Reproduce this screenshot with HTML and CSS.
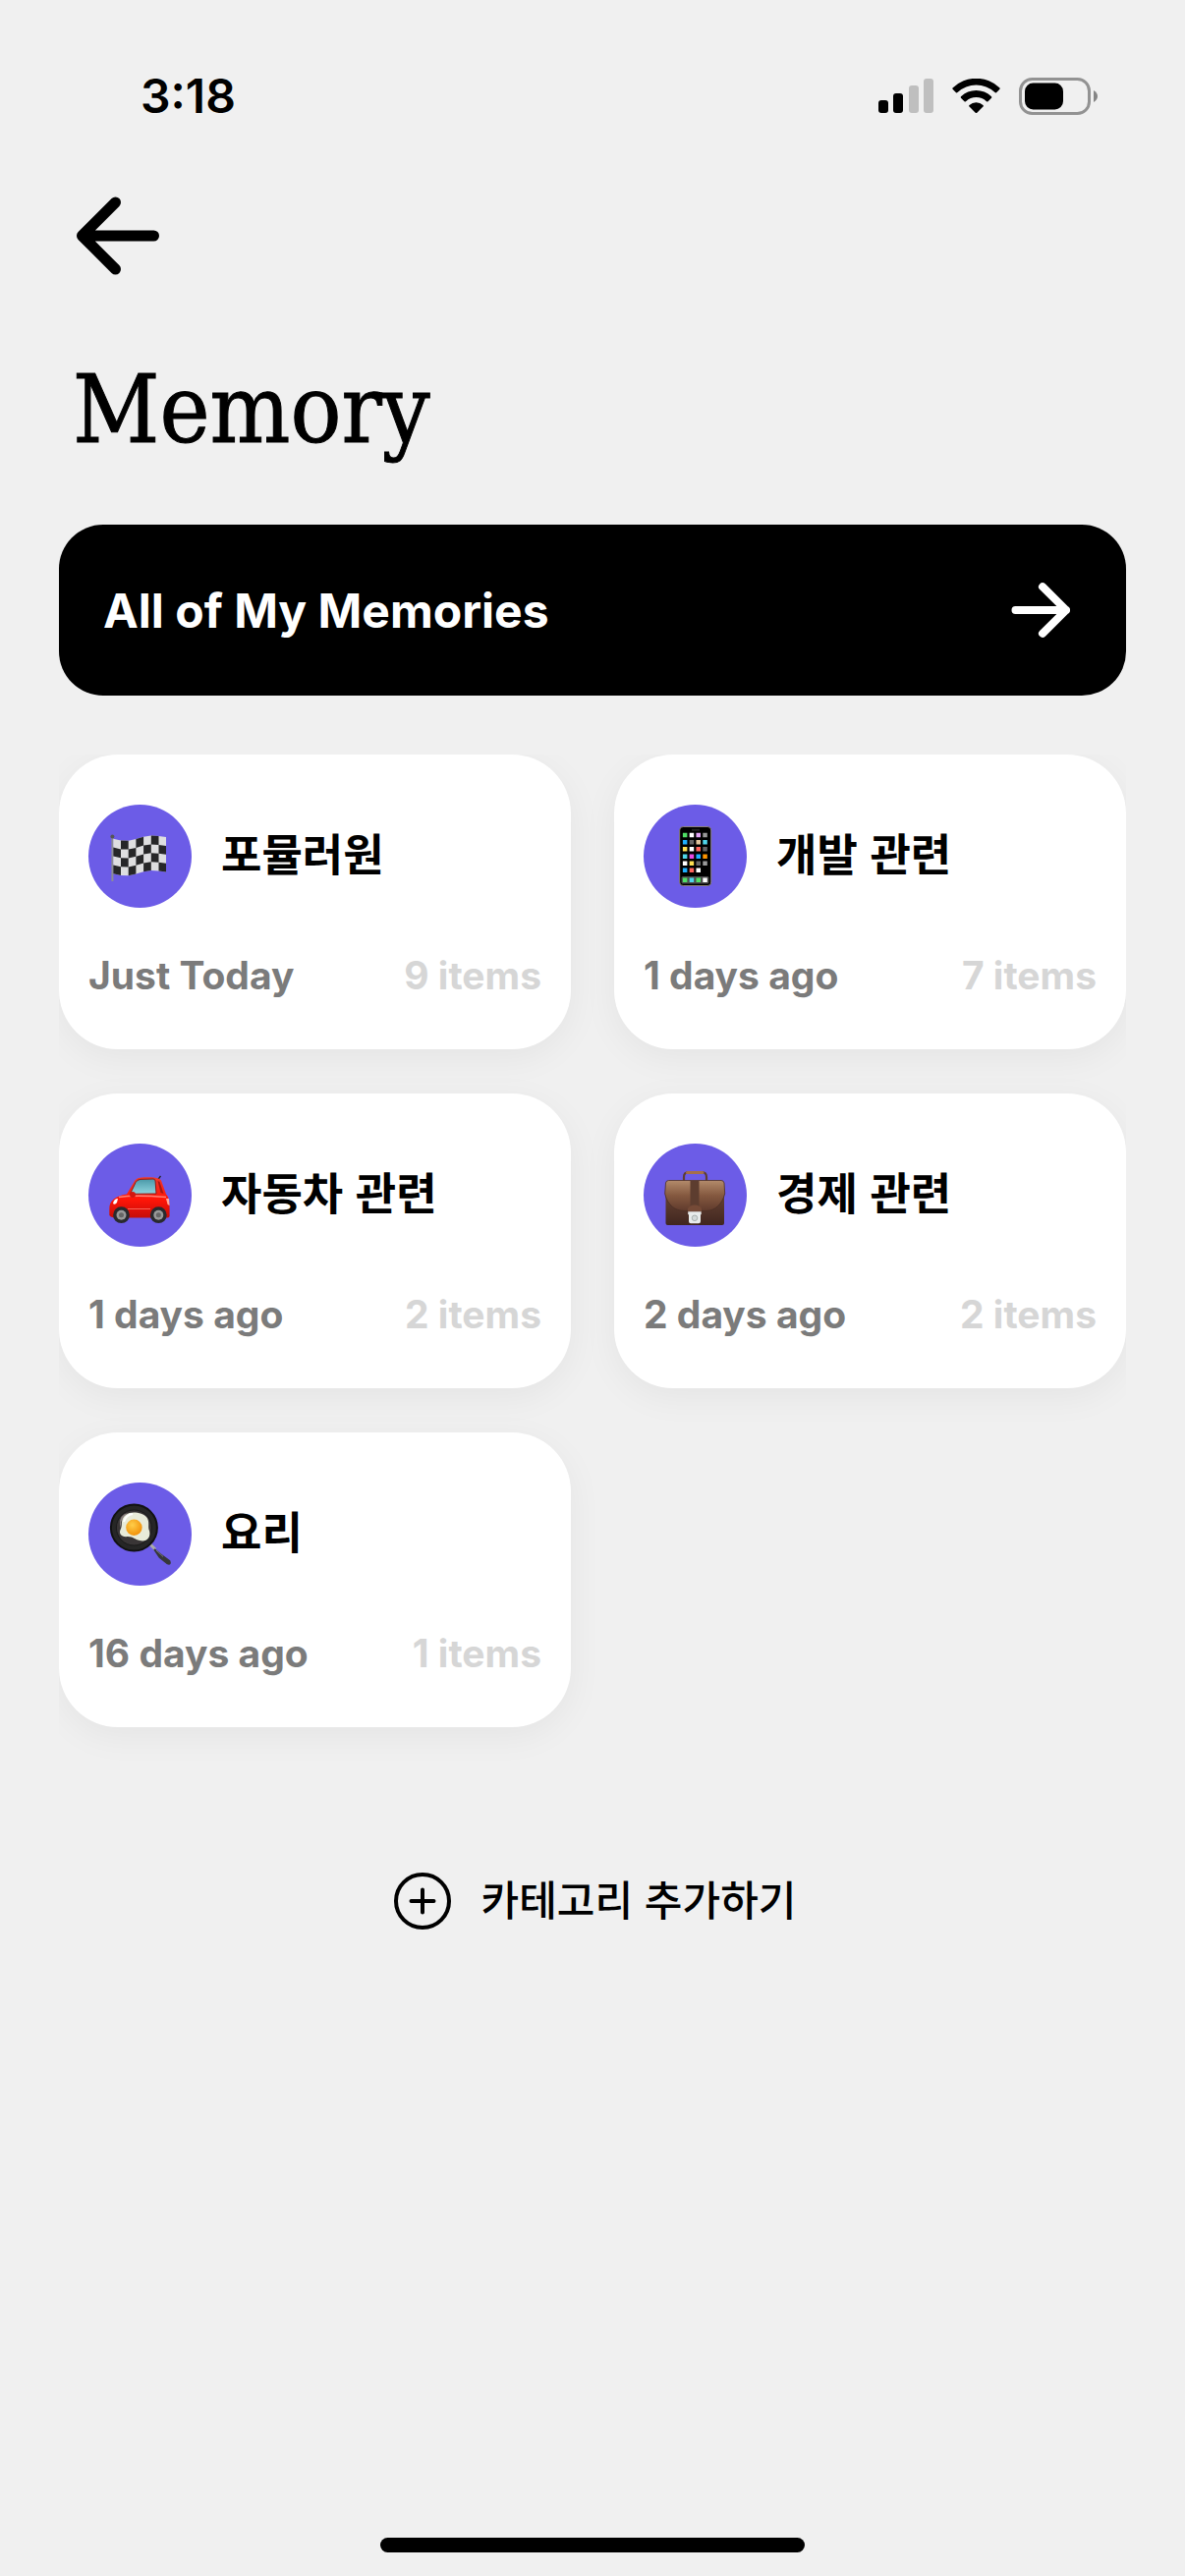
FILE: index.html
```html
<!DOCTYPE html>
<html lang="ko">

<head>
    <meta charset="utf-8">
    <meta name="viewport" content="width=device-width, initial-scale=1">
    <title>Memory</title>
    <link rel="stylesheet" href="styles.css">
</head>

<body>
    <header class="status-bar">
        <span class="time">3:18</span>
        <div class="status-icons">
            <svg width="56" height="36" viewBox="0 0 56 36">
                <rect x="0" y="22" width="10" height="13" rx="3" />
                <rect x="15" y="15" width="10" height="20" rx="3" />
                <rect x="31" y="7" width="10" height="28" rx="3" fill="#bfbfbf" />
                <rect x="46" y="0" width="10" height="35" rx="3" fill="#bfbfbf" />
            </svg>
            <svg width="49" height="36" viewBox="0 0 49 36">
                <path d="M.5 9.5A34.5 34.5 0 0 1 48.500 9.500Q49 10.500 48 11.300L45 14.300Q44.300 14.800 43.500 14A28 28 0 0 0 5.500 14Q4.700 14.800 4 14.300L1 11.300Q0 10.500 .5 9.500z" />
                <path d="M9 18.200A22.500 22.500 0 0 1 40 18.200Q40.700 19 40 19.800L36.500 23.200Q35.800 23.800 35 23.200A15.500 15.500 0 0 0 14 23.200Q13.200 23.800 12.500 23.200L9 19.800Q8.300 19 9 18.200z" />
                <path d="M17.500 27A10.500 10.500 0 0 1 31.500 27Q32.300 27.800 31.500 28.600L25.300 34.700Q24.500 35.400 23.700 34.700L17.500 28.600Q16.700 27.800 17.500 27z" />
            </svg>
            <svg width="80" height="38" viewBox="0 0 80 38">
                <rect x="1.500" y="1.500" width="70" height="35" rx="12" fill="none" stroke="#929292" stroke-width="3" />
                <rect x="6" y="5.500" width="39" height="27" rx="8.500" />
                <path d="M76 13Q80 15.500 80 19T76 25z" fill="#858585" />
            </svg>
        </div>
    </header>

    <main class="content">
        <button class="back" aria-label="Back">
            <svg width="90" height="90" viewBox="0 0 90 90">
                <path d="M81.500 45H9M42.500 11L8.500 45l34 34" />
            </svg>
        </button>

        <h1>Memory</h1>

        <a class="all-memories" href="#">
            All of My Memories
            <svg width="60" height="60" viewBox="0 0 60 60">
                <path d="M4.500 30H56M32 6.200L56 30L32 53.800" />
            </svg>
        </a>

        <div class="categories">
            <a class="card" href="#">
                <div class="card-title">
                    <svg class="icon" viewBox="0 0 105 105">
                        <path d="M24.400 32v46" stroke="#8d8d96" stroke-width="2" />
                        <circle cx="24.400" cy="32.500" r="2" fill="#555" />
                        <path d="M25.300 34.700L33 36.500L40.700 36.700L48.400 35L56.100 32.700L63.800 31.500L71.500 32L79 33V68.600L71.500 67.600L63.800 67.100L56.100 68.300L48.400 70.600L40.700 72.300L33 72.100L25.300 70.300z" fill="#dedee0" />
                        <path fill="#262628" d="M25.300 43.600l7.700 1.800v8.900l-7.700-1.800zM25.300 61.400l7.700 1.800v8.900l-7.700-1.800z
                            M33 36.500l7.700 .2v8.900l-7.700-.2zM33 54.300l7.700 .2v8.900l-7.700-.2z
                            M40.700 45.600l7.700-1.700v8.900l-7.700 1.700zM40.700 63.400l7.700-1.700v8.900l-7.700 1.700z
                            M48.400 35l7.700-2.300v8.900l-7.700 2.300zM48.400 52.800l7.700-2.300v8.900l-7.700 2.300z
                            M56.100 41.600l7.700-1.200v8.900l-7.700 1.200zM56.100 59.400l7.700-1.200v8.900l-7.700 1.200z
                            M63.800 31.500l7.700 .5v8.900l-7.700-.5zM63.800 49.300l7.700 .5v8.900l-7.700-.5z
                            M71.500 40.900l7.500 1v8.900l-7.500-1zM71.500 58.700l7.500 1v8.900l-7.500-1z" />
                    </svg>
                    <h2>포뮬러원</h2>
                </div>
                <div class="card-info">
                    <span>Just Today</span>
                    <span class="count">9 items</span>
                </div>
            </a>

            <a class="card" href="#">
                <div class="card-title">
                    <svg class="icon" viewBox="0 0 105 105">
                        <rect x="36.700" y="22.500" width="32" height="60" rx="3.500" stroke="#8b8078" stroke-width="1" />
                        <path d="M49 25.800h8" stroke="#222" stroke-width="2" />
                        <rect x="38.500" y="73" width="28" height="7.500" rx="1.500" fill="#4b4b4b" />
                        <g stroke-width="4.600" fill="none">
                            <path stroke="#4fe065" d="M39.900 31h4.500M39.900 76.700h4.500M53.500 76.700h4.500" />
                            <path stroke="#fff" d="M46.700 31h4.500M46.700 45.300h4.500M39.900 59.700h4.500M53.500 66.700h4.500M60.300 76.700h4.500" />
                            <path stroke="#e3a5f5" d="M53.500 31h4.500" />
                            <path stroke="#999" d="M60.300 31h4.500M60.300 59.700h4.500" />
                            <path stroke="#1fb0ff" d="M39.900 38.200h4.500M53.500 52.700h4.500M39.900 66.700h4.500" />
                            <path stroke="#666" d="M46.700 38.200h4.500M60.300 45.300h4.500M53.500 59.700h4.500" />
                            <path stroke="#dfc39c" d="M53.500 38.200h4.500" />
                            <path stroke="#4fd5ea" d="M60.300 38.200h4.500M39.900 52.700h4.500M46.700 76.700h4.500" />
                            <path stroke="#ffe052" d="M39.900 45.300h4.500M46.700 59.700h4.500" />
                            <path stroke="#ff645c" d="M53.500 45.300h4.500M46.700 66.700h4.500" />
                            <path stroke="#ea4ae3" d="M46.700 52.700h4.500" />
                            <path stroke="#ff9500" d="M60.300 52.700h4.500" />
                        </g>
                    </svg>
                    <h2>개발 관련</h2>
                </div>
                <div class="card-info">
                    <span>1 days ago</span>
                    <span class="count">7 items</span>
                </div>
            </a>

            <a class="card" href="#">
                <div class="card-title">
                    <svg class="icon" viewBox="0 0 105 105">
                        <defs>
                            <linearGradient id="car" x2="0" y2="1">
                                <stop offset="0" stop-color="#ef3a2c" />
                                <stop offset=".55" stop-color="#ff1508" />
                                <stop offset="1" stop-color="#c50d08" />
                            </linearGradient>
                            <linearGradient id="glass" x2="0" y2="1">
                                <stop offset="0" stop-color="#4998a8" />
                                <stop offset="1" stop-color="#91d5de" />
                            </linearGradient>
                        </defs>
                        <path d="M70.500 37l3-4" stroke="#222" stroke-width="1.300" />
                        <path d="M21.300 67C21 58 27 53.500 39 51.500L47 38C49 35 52 34.200 59 34.200C66 34.200 72 34.500 74 37.500L79 51.500C82 55 83 58 82.600 74Q82 75.500 80 75.500H26Q22 74.500 21.300 73z" fill="url(#car)" />
                        <path d="M42.500 51.300L48 39.500Q49.500 36.600 53 36.400L66 36Q67.800 36 68.100 38L69 51z" fill="url(#glass)" stroke="#8d1b16" />
                        <path d="M70.500 38l3 12 3 1-4-12z" fill="#a81612" />
                        <path d="M31 54.500Q47 52 79 54.500" fill="none" stroke="#ff8175" stroke-width="1.400" />
                        <path d="M40 66.500H63" stroke="#fa6257" stroke-width="1" />
                        <path d="M25 61q1-5 5-5l-1 4q-2 3-4 1z" fill="#fff" />
                        <circle cx="45" cy="52" r="3" fill="#d41710" />
                        <path d="M79 56h3l.6 7-2-1z" fill="#ffae9f" />
                        <circle cx="33.500" cy="72.700" r="8.400" fill="#292a2e" />
                        <circle cx="71.300" cy="72.700" r="8.400" fill="#292a2e" />
                        <circle cx="33.500" cy="72.700" r="5" fill="#999" />
                        <circle cx="71.300" cy="72.700" r="5" fill="#999" />
                        <circle cx="33.500" cy="72.700" r="2.500" fill="#666" />
                        <circle cx="71.300" cy="72.700" r="2.500" fill="#666" />
                    </svg>
                    <h2>자동차 관련</h2>
                </div>
                <div class="card-info">
                    <span>1 days ago</span>
                    <span class="count">2 items</span>
                </div>
            </a>

            <a class="card" href="#">
                <div class="card-title">
                    <svg class="icon" viewBox="0 0 105 105">
                        <defs>
                            <linearGradient id="case" x2="0" y2="1">
                                <stop offset="0" stop-color="#6b4636" />
                                <stop offset="1" stop-color="#40261f" />
                            </linearGradient>
                            <linearGradient id="flap" x2="0" y2="1">
                                <stop offset="0" stop-color="#b38b6b" />
                                <stop offset=".5" stop-color="#84583f" />
                                <stop offset="1" stop-color="#603b2d" />
                            </linearGradient>
                        </defs>
                        <path d="M41 38v-4q0-5 5-5h13q5 0 5 5v4" fill="none" stroke="#5e3e33" stroke-width="2.200" />
                        <path d="M44.500 29.500h15.500" stroke="#a56f4b" stroke-width="3" stroke-linecap="round" />
                        <path d="M22.500 48h59.500v33q0 2-2 2H24.500q-2 0-2-2z" fill="url(#case)" />
                        <path d="M22.500 40q.5-2.500 3-2.500H79q2.500 0 3 2.500l.7 11C80 62 72 68.500 64 68.500H41C32 68.500 24 62 21.700 51z" fill="url(#flap)" stroke="#4c3026" stroke-width=".8" />
                        <path d="M47.500 38h9v26h-9z" fill="#5d3d2f" />
                        <path d="M45 69v-3q2-3.500 7-3.500t7 3.500v3z" fill="#754a37" />
                        <path d="M45.200 69.300h13.500v3H58v7q0 2-2 2h-8q-2 0-2-2v-7h-.8z" fill="#e8eceb" />
                        <circle cx="52" cy="75.800" r="2.800" fill="#d4dad9" stroke="#9ca4a2" stroke-width=".8" />
                    </svg>
                    <h2>경제 관련</h2>
                </div>
                <div class="card-info">
                    <span>2 days ago</span>
                    <span class="count">2 items</span>
                </div>
            </a>

            <a class="card" href="#">
                <div class="card-title">
                    <svg class="icon" viewBox="0 0 105 105">
                        <defs>
                            <radialGradient id="yolk" cx=".4" cy=".35" r=".7">
                                <stop offset="0" stop-color="#ffce4a" />
                                <stop offset="1" stop-color="#f08d05" />
                            </radialGradient>
                        </defs>
                        <path d="M63 63l5 5" stroke="#aaa" stroke-width="3" />
                        <path d="M67.500 68.500L73 73L82.500 80Q84 84 80 82L72.500 76z" fill="#37383a" stroke="#37383a" stroke-width="2" stroke-linejoin="round" />
                        <path d="M69 69l7 6.500" stroke="#777" stroke-width="1" />
                        <circle cx="46.400" cy="46" r="23.500" fill="#262626" stroke="#111" stroke-width="2" />
                        <circle cx="46.400" cy="46" r="18" fill="#393536" stroke="#1a1a1a" stroke-width="1" />
                        <path d="M32 43Q31 33 40 31Q30 39 34 49z" fill="#887e7d" />
                        <path d="M38 33C43 28 56 31 59 35C63 40 60 45 62 49C64 56 59 61 52 59C47 58 46 55 40 55C34 56 30 52 33 47C35 43 32 38 38 33z" fill="#e8ebd9" />
                        <path d="M36 40q2-7 9-8" fill="none" stroke="#fff" stroke-width="2" />
                        <circle cx="46.400" cy="45.700" r="8.200" fill="url(#yolk)" />
                    </svg>
                    <h2>요리</h2>
                </div>
                <div class="card-info">
                    <span>16 days ago</span>
                    <span class="count">1 items</span>
                </div>
            </a>
        </div>

        <button class="add">
            <svg width="60" height="60" viewBox="0 0 60 60">
                <circle cx="30" cy="30" r="27" />
                <path d="M30 18.500v23M18.500 30h23" />
            </svg>
            <span>카테고리 추가하기</span>
        </button>
    </main>

    <div class="home-indicator"></div>
</body>

</html>
```

FILE: styles.css
```css
* {
    box-sizing: border-box;
}

body {
    margin: 0;
    min-height: 100vh;
    display: flex;
    flex-direction: column;
    background-color: #f0f0f0;
    color: black;
    font-family: Inter, "Noto Sans CJK KR", sans-serif;
}

h1, h2 {
    margin: 0;
}

a {
    color: inherit;
    text-decoration: none;
}

button {
    padding: 0;
    border: none;
    background: none;
    color: inherit;
    font: inherit;
}

svg {
    display: block;
    flex-shrink: 0;
}

.status-bar {
    display: flex;
    justify-content: space-between;
    align-items: center;
    height: 195px;
    padding: 0 89px 0 143px;
}

.time {
    font-size: 48px;
    font-weight: 600;
}

.status-icons {
    display: flex;
    align-items: center;
    gap: 19px;
}

.content {
    display: flex;
    flex-direction: column;
    padding: 0 60px;
}

.back {
    align-self: flex-start;
    margin-left: 15px;
}

.back path {
    fill: none;
    stroke: black;
    stroke-width: 11;
    stroke-linecap: round;
    stroke-linejoin: round;
}

h1 {
    margin: 72px 14px 57px;
    font-family: "DejaVu Serif Condensed", "DejaVu Serif", serif;
    font-size: 96px;
    font-weight: 400;
    line-height: 120px;
    -webkit-text-stroke: 1px black;
}

.all-memories {
    display: flex;
    justify-content: space-between;
    align-items: center;
    height: 174px;
    padding: 0 57px 0 45px;
    border-radius: 45px;
    background-color: black;
    color: white;
    font-size: 48px;
    font-weight: 700;
}

.all-memories path {
    fill: none;
    stroke: white;
    stroke-width: 8;
    stroke-linecap: round;
    stroke-linejoin: round;
}

/* shadows are cut at the top and sides of the list */
.categories {
    display: grid;
    grid-template-columns: 1fr 1fr;
    gap: 45px 44px;
    margin-top: 60px;
    clip-path: inset(0 0 -60px 0);
}

.card {
    padding: 51px 30px 48px;
    border-radius: 60px;
    background-color: white;
    box-shadow: 0 9px 36px rgba(0, 0, 0, .05);
}

.card-title {
    display: flex;
    align-items: center;
    gap: 30px;
}

.icon {
    width: 105px;
    height: 105px;
    border-radius: 50%;
    background-color: #6c5ce7;
}

h2 {
    padding-bottom: 8px;
    font-family: "Noto Sans CJK KR", sans-serif;
    font-size: 45px;
    font-weight: 700;
    line-height: 60px;
}

.card-info {
    display: flex;
    justify-content: space-between;
    margin-top: 42px;
    color: #7b7b7b;
    font-size: 39px;
    font-weight: 700;
    line-height: 54px;
}

.count {
    color: #d6d6d6;
}

.add {
    display: flex;
    align-items: center;
    align-self: center;
    gap: 30px;
    margin-top: 144px;
    padding-left: 4px;
    font-family: "Noto Sans CJK KR", sans-serif;
    font-size: 42px;
    font-weight: 500;
    line-height: 60px;
}

.add span {
    padding-bottom: 6px;
}

.add circle, .add path {
    fill: none;
    stroke: black;
    stroke-width: 4;
    stroke-linecap: round;
}

.home-indicator {
    width: 432px;
    height: 15px;
    margin: auto auto 24px;
    border-radius: 8px;
    background-color: black;
}
```
